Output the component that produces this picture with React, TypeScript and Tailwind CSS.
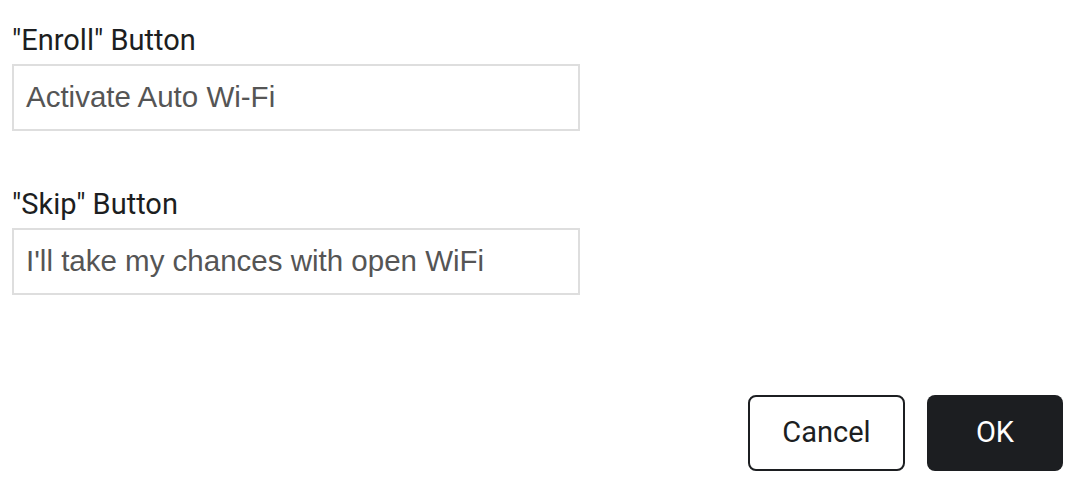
export default function App() {
  return (
    <div className="w-[1088px] h-[486px] bg-white flex flex-col px-3 pt-[24px] font-['Roboto',sans-serif]">
      <div className="w-[568px]">
        <label className="block text-[29px] leading-[32px] text-[#1c1e21]">"Enroll" Button</label>
        <div className="mt-[8px] h-[67px] border-2 border-[#dedede] flex items-center px-3">
          <span className="text-[29.5px] text-[#555] font-['Liberation_Sans',Arial,sans-serif]">Activate Auto Wi-Fi</span>
        </div>
      </div>
      <div className="w-[568px] mt-[57px]">
        <label className="block text-[29px] leading-[32px] text-[#1c1e21]">"Skip" Button</label>
        <div className="mt-[8px] h-[67px] border-2 border-[#dedede] flex items-center px-3">
          <span className="text-[29.5px] text-[#555] font-['Liberation_Sans',Arial,sans-serif]">I'll take my chances with open WiFi</span>
        </div>
      </div>
      <div className="flex justify-end gap-[22px] mt-[100px] pr-[13px]">
        <button className="w-[157px] h-[76px] rounded-[8px] border-2 border-[#1c1e21] bg-white text-[29px] text-[#1c1e21]">
          Cancel
        </button>
        <button className="w-[136px] h-[76px] rounded-[8px] bg-[#1c1e21] text-[29px] text-white">
          OK
        </button>
      </div>
    </div>
  )
}
